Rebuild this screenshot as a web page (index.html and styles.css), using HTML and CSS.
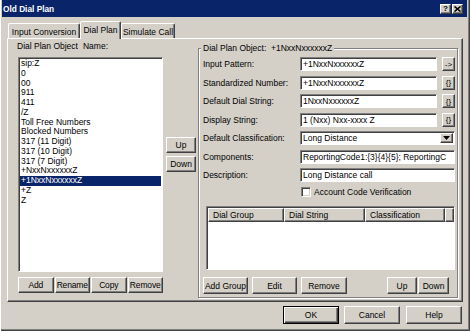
FILE: index.html
```html
<!DOCTYPE html>
<html>
<head>
<meta charset="utf-8">
<title>Old Dial Plan</title>
<link rel="stylesheet" href="styles.css">
</head>
<body>
<div class="window">
  <div class="titlebar">
    <span class="title">Old Dial Plan</span>
    <div class="tb-btns">
      <span class="tb-btn raised">?</span>
      <span class="tb-btn raised"><svg width="7" height="6" viewBox="0 0 7 6"><path d="M0.5 0.5 L6.5 5.5 M6.5 0.5 L0.5 5.5" stroke="#000" stroke-width="1.6"/></svg></span>
    </div>
  </div>
  <div class="tabs">
    <div class="tab tab-first">Input Conversion</div>
    <div class="tab tab-active">Dial Plan</div>
    <div class="tab tab-last">Simulate Call</div>
  </div>
  <div class="panel">
    <div class="leftcol">
      <div class="lbl-top">Dial Plan Object<span class="lbl-gap"></span>Name:</div>
      <div class="listbox sunken">
        <div class="item">sip:Z</div>
        <div class="item">0</div>
        <div class="item">00</div>
        <div class="item">911</div>
        <div class="item">411</div>
        <div class="item">/Z</div>
        <div class="item">Toll Free Numbers</div>
        <div class="item">Blocked Numbers</div>
        <div class="item">317 (11 Digit)</div>
        <div class="item">317 (10 Digit)</div>
        <div class="item">317 (7 Digit)</div>
        <div class="item">+NxxNxxxxxxZ</div>
        <div class="item selected">+1NxxNxxxxxxZ</div>
        <div class="item">+Z</div>
        <div class="item">Z</div>
      </div>
      <div class="btnrow4">
        <div class="btn raised">Add</div>
        <div class="btn raised">Rename</div>
        <div class="btn raised">Copy</div>
        <div class="btn raised">Remove</div>
      </div>
    </div>
    <div class="midcol">
      <div class="btn raised mid-btn">Up</div>
      <div class="btn raised mid-btn">Down</div>
    </div>
    <div class="group">
      <div class="legend">Dial Plan Object:&nbsp; +1NxxNxxxxxxZ</div>
      <div class="form">
        <div class="flabel">Input Pattern:</div>
        <div class="field sunken">+1NxxNxxxxxxZ</div>
        <div class="btn raised sbtn">-&gt;</div>

        <div class="flabel">Standardized Number:</div>
        <div class="field sunken">+1NxxNxxxxxxZ</div>
        <div class="btn raised sbtn">{}</div>

        <div class="flabel">Default Dial String:</div>
        <div class="field sunken">1NxxNxxxxxxZ</div>
        <div class="btn raised sbtn">{}</div>

        <div class="flabel">Display String:</div>
        <div class="field sunken">1 (Nxx) Nxx-xxxx Z</div>
        <div class="btn raised sbtn">{}</div>

        <div class="flabel">Default Classification:</div>
        <div class="field sunken wide select">
          <span class="select-text">Long Distance</span>
          <span class="select-arrow raised"><svg width="7" height="4" viewBox="0 0 7 4"><path d="M0 0 H7 L3.5 4 Z" fill="#000"/></svg></span>
        </div>

        <div class="flabel">Components:</div>
        <div class="field sunken wide">ReportingCode1:{3}{4}{5}; ReportingC</div>

        <div class="flabel">Description:</div>
        <div class="field sunken wide">Long Distance call</div>
      </div>
      <div class="checkrow">
        <span class="checkbox sunken"></span>
        <span>Account Code Verification</span>
      </div>
      <div class="table sunken">
        <div class="thead">
          <div class="th raised th-group">Dial Group</div>
          <div class="th raised th-string">Dial String</div>
          <div class="th raised th-class">Classification</div>
          <div class="th raised th-rest"></div>
        </div>
      </div>
      <div class="gbtns">
        <div class="btn raised gb-add">Add Group</div>
        <div class="btn raised gb-edit">Edit</div>
        <div class="btn raised gb-remove">Remove</div>
        <div class="btn raised gb-up">Up</div>
        <div class="btn raised gb-down">Down</div>
      </div>
    </div>
  </div>
  <div class="footer">
    <div class="btn raised fbtn default">OK</div>
    <div class="btn raised fbtn f-cancel">Cancel</div>
    <div class="btn raised fbtn">Help</div>
  </div>
</div>
</body>
</html>
```
FILE: styles.css
```css
* { box-sizing: border-box; margin: 0; padding: 0; }

body {
  margin: 0;
  background: #d4d0c8;
  font-family: "Liberation Sans", Arial, sans-serif;
  font-size: 8.5px;
  color: #000;
}

.window {
  width: 470px;
  height: 331px;
  background: #d4d0c8;
  padding: 0 3px 3px 2px;
  box-shadow: inset 1px 0 #ffffff, inset -1px -1px #404040, inset -2px -2px #808080;
  display: flex;
  flex-direction: column;
  overflow: hidden;
}

.raised {
  background: #d4d0c8;
  border: 1px solid;
  border-color: #ffffff #404040 #404040 #ffffff;
  box-shadow: inset -1px -1px #808080;
}

.sunken {
  background: #ffffff;
  border: 1px solid;
  border-color: #808080 #ffffff #ffffff #808080;
  box-shadow: inset 1px 1px #404040;
}

/* Title bar */
.titlebar {
  flex: none;
  height: 17px;
  background: #0a246a;
  color: #fff;
  display: flex;
  align-items: center;
  justify-content: space-between;
  padding: 0 4px 0 1px;
}
.title { font-weight: bold; font-size: 8.3px; }
.tb-btns { display: flex; gap: 1px; }
.tb-btn {
  width: 11px;
  height: 10px;
  display: flex;
  align-items: center;
  justify-content: center;
  color: #000;
  font-weight: bold;
  font-size: 8px;
  line-height: 8px;
}

/* Tabs */
.tabs {
  flex: none;
  height: 21px;
  display: flex;
  align-items: flex-end;
  padding-left: 6px;
}
.tab {
  height: 15px;
  display: flex;
  align-items: center;
  justify-content: center;
  border: 1px solid;
  border-bottom: none;
  border-color: #ffffff #404040 transparent #ffffff;
  border-radius: 2px 2px 0 0;
  box-shadow: inset -1px 0 #808080;
  padding-top: 1px;
  white-space: nowrap;
}
.tab-first { width: 72px; }
.tab-active {
  width: 41px;
  height: 18px;
  margin-bottom: -1px;
  position: relative;
  z-index: 1;
  background: #d4d0c8;
  padding-bottom: 3px;
}
.tab-last { width: 54px; }

/* Tab page */
.panel {
  flex: none;
  height: 264px;
  margin: 0 4px 0 5px;
  border: 1px solid;
  border-color: #ffffff #404040 #404040 #ffffff;
  box-shadow: inset -1px -1px #808080;
  display: flex;
  align-items: flex-start;
  padding-left: 10px;
}

.leftcol {
  width: 145px;
  display: flex;
  flex-direction: column;
}
.lbl-top {
  height: 18px;
  line-height: 10px;
  padding-top: 2px;
  margin-left: -1px;
  white-space: nowrap;
}
.lbl-gap { display: inline-block; width: 5px; }

.listbox {
  height: 215px;
  padding: 1px;
  overflow: hidden;
}
.item {
  height: 9.77px;
  line-height: 9.77px;
  padding-left: 1px;
  white-space: nowrap;
}
.item.selected { background: #0a246a; color: #fff; }

.btnrow4 {
  margin-top: 5px;
  height: 16px;
  display: grid;
  grid-template-columns: repeat(4, 1fr);
  gap: 1px;
}
.btnrow4 .btn { letter-spacing: -0.15px; }

.btn {
  display: flex;
  align-items: center;
  justify-content: center;
  white-space: nowrap;
}

.midcol {
  margin-left: 3px;
  width: 30px;
  padding-top: 98px;
  display: flex;
  flex-direction: column;
  gap: 3px;
}
.mid-btn { height: 16px; }

/* Group box */
.group {
  margin-left: 2px;
  margin-top: 9px;
  width: 260px;
  height: 250px;
  border: 1px solid #808080;
  box-shadow: inset 1px 1px #ffffff, 1px 1px #ffffff;
  padding: 0 2px 0 4px;
  display: flex;
  flex-direction: column;
}
.legend {
  align-self: flex-start;
  margin-top: -6px;
  margin-left: -2px;
  padding: 0 2px;
  height: 10px;
  line-height: 10px;
  background: #d4d0c8;
  white-space: nowrap;
}

.form {
  margin-top: 4px;
  display: grid;
  grid-template-columns: 97px 137px 5px 13px;
  grid-auto-rows: 14px;
  row-gap: 4.5px;
}
.flabel {
  grid-column: 1;
  display: flex;
  align-items: center;
  white-space: nowrap;
}
.field {
  grid-column: 2;
  padding-left: 2px;
  display: flex;
  align-items: center;
  white-space: nowrap;
  overflow: hidden;
}
.wide { grid-column: 2 / 5; }
.sbtn { grid-column: 4; font-size: 8px; }

.select { justify-content: space-between; padding-right: 1px; }
.select-arrow {
  width: 13px;
  height: 10px;
  display: flex;
  align-items: center;
  justify-content: center;
  flex: none;
}

.checkrow {
  margin-top: 5px;
  padding-left: 98px;
  height: 10px;
  display: flex;
  align-items: center;
  gap: 3px;
  white-space: nowrap;
}
.checkbox {
  width: 10px;
  height: 10px;
  flex: none;
  box-shadow: inset 1px 1px #404040, inset -1px -1px #d4d0c8;
}

.table {
  margin-top: 9px;
  margin-left: 3px;
  width: 249px;
  height: 64px;
  padding: 1px 0 0 1px;
  overflow: hidden;
}
.thead { display: flex; height: 14px; }
.th {
  display: flex;
  align-items: center;
  padding-left: 4px;
  white-space: nowrap;
}
.th-group { width: 76px; }
.th-string { width: 81px; }
.th-class { width: 80px; }
.th-rest { flex: 1; }

.gbtns {
  margin-top: 7px;
  margin-right: 6px;
  height: 17px;
  display: flex;
}
.gb-add { width: 45px; }
.gb-edit { width: 45px; margin-left: 4px; }
.gb-remove { width: 46px; margin-left: 4px; }
.gb-up { width: 30px; margin-left: auto; }
.gb-down { width: 31px; margin-left: 1px; }

/* Footer */
.footer {
  flex: none;
  height: 26px;
  display: flex;
  justify-content: flex-end;
  align-items: flex-start;
  padding: 4px 5px 0 0;
}
.fbtn { width: 56px; height: 18px; margin-left: 6px; }
.default {
  border: 1px solid #000;
  box-shadow: inset 1px 1px #ffffff, inset -1px -1px #404040, inset -2px -2px #808080;
}
.f-cancel { margin-left: 5px; }
```
